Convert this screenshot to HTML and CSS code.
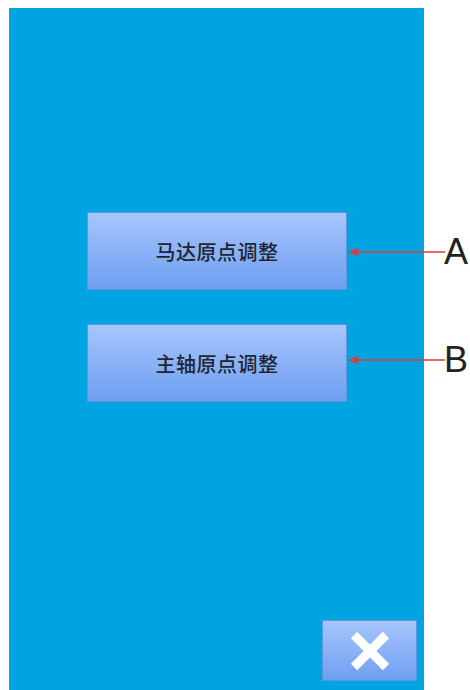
FILE: index.html
```html
<!DOCTYPE html>
<html>
<head>
    <title>原点调整</title>
    <link rel="stylesheet" href="styles.css">
</head>
<body>
    <div class="page">
        <div class="panel">
            <div class="menu">
                <div class="btn">马达原点调整</div>
                <div class="btn">主轴原点调整</div>
            </div>
            <div class="footer">
                <div class="btn-close">
                    <svg width="44" height="40" viewBox="0 0 44 40">
                        <path d="M6 4 L38 36 M38 4 L6 36" stroke="#fff" stroke-width="9" stroke-linecap="butt"/>
                    </svg>
                </div>
            </div>
        </div>

        <!-- anotaciones -->
        <div class="callout callout-a">
            <svg width="100" height="12" viewBox="0 0 100 12">
                <path d="M4 6 H97" stroke="#e03a3a" stroke-width="1.5"/>
                <path d="M0 6 L11 1.5 L9 6 L11 10.5 Z" fill="#e03a3a"/>
            </svg>
            <span>A</span>
        </div>
        <div class="callout callout-b">
            <svg width="100" height="12" viewBox="0 0 100 12">
                <path d="M4 6 H97" stroke="#e03a3a" stroke-width="1.5"/>
                <path d="M0 6 L11 1.5 L9 6 L11 10.5 Z" fill="#e03a3a"/>
            </svg>
            <span>B</span>
        </div>
    </div>
</body>
</html>
```

FILE: styles.css
```css
body {
    margin: 0;
    background-color: #fff;
    font-family: "Noto Sans CJK SC", "Liberation Sans", sans-serif;
}
.page {
    position: relative;
    width: 470px;
    height: 690px;
}
.panel {
    position: relative;
    margin-left: 9px;
    width: 415px;
    height: 682px;
    top: 8px;
    background-color: #00a4e1;
    display: flex;
    flex-direction: column;
    box-sizing: border-box;
    padding: 204px 0 9px 78px;
}
.menu {
    display: flex;
    flex-direction: column;
    gap: 34px;
}
.btn {
    width: 260px;
    height: 78px;
    box-sizing: border-box;
    border: 1px solid #5f95db;
    background: linear-gradient(#a6c6fc, #6f9ef1);
    display: flex;
    align-items: center;
    justify-content: center;
    font-size: 20px;
    font-weight: 500;
    color: #1f2533;
    letter-spacing: 0.5px;
}
.footer {
    margin-top: auto;
    display: flex;
    justify-content: flex-end;
    padding-right: 7px;
}
.btn-close {
    width: 95px;
    height: 61px;
    box-sizing: border-box;
    border: 1px solid #5f95db;
    background: linear-gradient(#a6c6fc, #6f9ef1);
    display: flex;
    align-items: center;
    justify-content: center;
}
.callout {
    position: absolute;
    left: 348px;
    display: flex;
    align-items: center;
    height: 40px;
}
.callout svg {
    display: block;
}
.callout span {
    font-family: "Liberation Sans", Arial, sans-serif;
    font-size: 36px;
    color: #222;
    margin-left: -4px;
}
.callout-a {
    top: 232px;
}
.callout-b {
    top: 340px;
}
```
